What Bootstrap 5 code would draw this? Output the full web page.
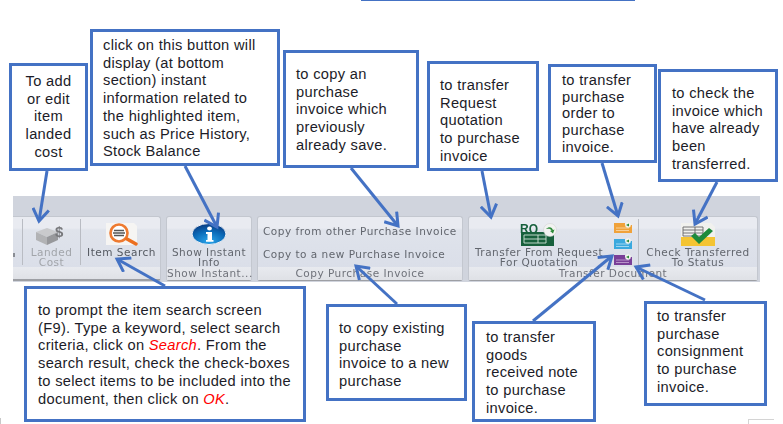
<!DOCTYPE html>
<html lang="en">
<head>
    <meta charset="UTF-8">
    <meta name="viewport" content="width=device-width, initial-scale=1.0">
    <title>Purchase Invoice Toolbar</title>
    <link rel="stylesheet" href="https://cdn.jsdelivr.net/npm/bootstrap@5.3.0/dist/css/bootstrap.min.css">
    <style>
        body { background: #fff; overflow: hidden; }
        .canvas { position: relative; width: 783px; height: 424px; overflow: hidden; padding: 196px 0 0 13px; }

        /* Ribbon */
        .ribbon { width: 747px; height: 86px; background: #d0d4dd; padding-top: 20px; gap: 5px; font-family: "DejaVu Sans", sans-serif; font-size: 10.5px; letter-spacing: .5px; line-height: 14px; color: #62666e; filter: blur(.45px); }
        .rib-group { height: 65px; flex: none; flex-direction: column; border: 1px solid #c3c7cf; border-bottom: 2px solid #9d9fa4; border-radius: 3px; background: linear-gradient(#e9ebf1 0, #e9ebf1 11px, #dfe3eb 13px, #d9dde8 100%); }
        .rib-first { width: 148px; border-left: 0; border-radius: 0 3px 3px 0; }
        .rib-info { width: 86px; }
        .rib-copy { width: 206px; }
        .rib-transfer { width: 290px; }
        .rib-body { height: 50px; flex: none; }
        .rib-cap { height: 13px; line-height: 13px; text-align: center; white-space: nowrap; background: linear-gradient(#e8eaef, #dfe1e6); color: #6f727a; }
        .rib-btn { flex: none; flex-direction: column; align-items: center; padding-top: 5px; text-align: center; white-space: nowrap; line-height: 10px; }
        .rib-btn svg { display: block; height: 24px; margin-bottom: 1px; flex: none; }
        .rib-stub { width: 9px; padding-top: 36px; align-items: flex-start; }
        .rib-sliver { width: 2px; height: 4px; background: #8a8d94; }
        .rib-landed { width: 57px; color: #a2a5aa; }
        .rib-search { width: 81px; color: #555961; }
        .rib-show { width: 84px; }
        .rib-sep { width: 1px; height: 46px; margin-top: 2px; background: #b9bcc3; flex: none; }
        .rib-lines { flex-direction: column; gap: 13px; padding: 9px 0 0 5px; line-height: 10px; white-space: nowrap; }
        .rib-req { width: 140px; }
        .rib-small { width: 29px; flex-direction: column; gap: 5px; padding: 5px 0 0 5px; flex: none; }
        .rib-small svg { display: block; width: 18px; height: 11px; }
        .rib-check { width: 118px; }

        /* Callouts */
        .note { position: absolute; background: #fff; border: 3px solid #4472c4; font-family: "Liberation Sans", Arial, sans-serif; font-size: 14.67px; letter-spacing: .3px; line-height: 17.7px; color: #1c1c28; white-space: nowrap; }
        .note em { color: #f00; }
        #noteLanded { left: 9px; top: 63px; width: 79px; height: 108px; padding-top: 7px; text-align: center; }
        #noteInfo { left: 90px; top: 29px; width: 190px; height: 137px; padding: 5px 0 0 10px; }
        #noteCopy { left: 283px; top: 50px; width: 136px; height: 118px; padding: 13px 0 0 10px; }
        #noteRq { left: 427px; top: 61px; width: 112px; height: 110px; padding: 13px 0 0 10px; }
        #noteOrder { left: 548px; top: 64px; width: 109px; height: 99px; padding: 5px 0 0 11px; line-height: 16.7px; }
        #noteCheck { left: 658px; top: 69px; width: 120px; height: 113px; padding: 13px 0 0 11px; }
        #noteSearch { left: 24px; top: 286px; width: 282px; height: 136px; padding: 13px 0 0 11px; }
        #noteNew { left: 326px; top: 304px; width: 141px; height: 97px; padding: 13px 0 0 10px; }
        #noteGrn { left: 472px; top: 321px; width: 124px; height: 101px; padding: 5px 0 0 11px; }
        #noteCons { left: 644px; top: 301px; width: 123px; height: 105px; padding: 4px 0 0 10px; }

        .arrows { position: absolute; left: 0; top: 0; width: 783px; height: 424px; }
        .arrows line { stroke: #4472c4; stroke-width: 3; }
        .top-rule { position: absolute; left: 361px; top: 0; width: 274px; height: 1px; background: #4472c4; }
        .page-mark-l { position: absolute; left: 0; top: 418px; width: 1px; height: 6px; background: #c8c8c8; }
        .page-mark-r { position: absolute; left: 748px; top: 419px; width: 26px; height: 5px; border: 1px solid #d4d4d4; border-width: 1px 0 0 1px; }
    </style>
</head>
<body>
<div class="canvas">
    <div class="ribbon d-flex">
        <div class="rib-group rib-first d-flex">
            <div class="rib-body d-flex">
                <div class="rib-btn rib-stub d-flex"><div class="rib-sliver"></div></div>
                <div class="rib-sep"></div>
                <div class="rib-btn rib-landed d-flex">
                    <svg width="34" height="24" viewBox="0 0 34 24">
                        <path d="M1 10l11-4 11 4-11 5z" fill="#c9cacc"/>
                        <path d="M1 10v8l11 5v-8z" fill="#b2b3b5"/>
                        <path d="M23 10v8l-11 5v-8z" fill="#97989b"/>
                        <text x="20" y="15" font-family="Liberation Sans, sans-serif" font-weight="700" font-size="15" letter-spacing="0" fill="#77787b">$</text>
                    </svg>
                    Landed<br>Cost
                </div>
                <div class="rib-sep"></div>
                <div class="rib-btn rib-search d-flex">
                    <svg width="36" height="24" viewBox="0 0 36 24">
                        <path d="M2 1h28l3 3v19H2z" fill="#f6f5f3"/>
                        <circle cx="15" cy="11" r="8.500" fill="#fff" stroke="#ee7a30" stroke-width="2.600"/>
                        <path d="M10 8.500h10M9 11h12M10 13.500h10" stroke="#555" stroke-width="1.500"/>
                        <path d="M23 17l9 5" stroke="#ec6f1f" stroke-width="3.400" stroke-linecap="round"/>
                    </svg>
                    Item Search
                </div>
            </div>
            <div class="rib-cap"></div>
        </div>

        <div class="rib-group rib-info d-flex">
            <div class="rib-body d-flex">
                <div class="rib-btn rib-show d-flex">
                    <svg width="36" height="24" viewBox="0 0 36 24">
                        <defs><radialGradient id="infoBlue" cx=".5" cy=".85" r=".8"><stop offset="0" stop-color="#2aa5ea"/><stop offset=".6" stop-color="#0a6ab8"/><stop offset="1" stop-color="#0a3f86"/></radialGradient></defs>
                        <ellipse cx="18" cy="12" rx="17" ry="10.500" fill="url(#infoBlue)" stroke="#eef0f5"/>
                        <ellipse cx="18.500" cy="6.500" rx="2.400" ry="2" fill="#fff"/>
                        <path d="M15 10h6v8h1.500v1.800h-7.500V18h1.500v-6H15z" fill="#fff"/>
                    </svg>
                    Show Instant<br>Info
                </div>
            </div>
            <div class="rib-cap">Show Instant...</div>
        </div>

        <div class="rib-group rib-copy d-flex">
            <div class="rib-body rib-lines d-flex">
                <div>Copy from other Purchase Invoice</div>
                <div>Copy to a new Purchase Invoice</div>
            </div>
            <div class="rib-cap">Copy Purchase Invoice</div>
        </div>

        <div class="rib-group rib-transfer d-flex">
            <div class="rib-body d-flex">
                <div class="rib-btn rib-req d-flex">
                    <svg width="38" height="24" viewBox="0 0 38 24">
                        <path d="M1 10h33v14H1z" fill="#17603c"/>
                        <text x="0" y="11" font-family="Liberation Sans, sans-serif" font-weight="700" font-size="12" letter-spacing="0" fill="#17603c">RQ</text>
                        <path d="M4 13h22v8H4zM4 17h22M18 13v8" fill="none" stroke="#cfe3d6" stroke-width=".9"/>
                        <circle cx="30" cy="8" r="6.500" fill="#f2f3f1" stroke="#ccc" stroke-width=".5"/>
                        <path d="M26 7c3-3 6-2 7 1l1.500-.5-1.500 4-3-2.500 1.500-.5c-1-2-3-2-5-1.500z" fill="#2e8b3a"/>
                    </svg>
                    Transfer From Request<br>For Quotation
                </div>
                <div class="rib-small d-flex">
                    <svg viewBox="0 0 18 11"><path d="M0 1h11v2h7v8H0z" fill="#f0a23a"/><path d="M2 6h13M2 8.500h13" stroke="#fbdcae" stroke-width=".8"/><circle cx="14" cy="3" r="2.800" fill="#f4f4ee"/><path d="M12 3l3-1.500v3z" fill="#2e8b3a"/></svg>
                    <svg viewBox="0 0 18 11"><path d="M0 1h11v2h7v8H0z" fill="#3ba9de"/><path d="M2 6h13M2 8.500h13" stroke="#b8e2f6" stroke-width=".8"/><circle cx="14" cy="3" r="2.800" fill="#f4f4ee"/><path d="M12 3l3-1.500v3z" fill="#2e8b3a"/></svg>
                    <svg viewBox="0 0 18 11"><path d="M0 1h11v2h7v8H0z" fill="#7a3f98"/><path d="M2 6h13M2 8.500h13" stroke="#c8aad6" stroke-width=".8"/><circle cx="14" cy="3" r="2.800" fill="#f4f4ee"/><path d="M12 3l3-1.500v3z" fill="#2e8b3a"/></svg>
                </div>
                <div class="rib-sep"></div>
                <div class="rib-btn rib-check d-flex">
                    <svg width="36" height="24" viewBox="0 0 36 24">
                        <path d="M1 1h30l4 4v19H1z" fill="#f1f1ee"/>
                        <path d="M1 15h34v9H1z" fill="#f4c433"/>
                        <path d="M3 5h20v9H3zM3 8h20M3 11h20M15 5v9" fill="none" stroke="#666" stroke-width=".9"/>
                        <path d="M11 14l4-3 4 4 10-9 4 3-14 13z" fill="#1d8a3b"/>
                    </svg>
                    Check Transferred<br>To Status
                </div>
            </div>
            <div class="rib-cap">Transfer Document</div>
        </div>
    </div>

    <div class="top-rule"></div>
    <div class="page-mark-l"></div>
    <div class="page-mark-r"></div>

    <svg class="arrows" viewBox="0 0 783 424">
        <defs>
            <marker id="head" viewBox="0 0 16 18" refX="13" refY="9" markerWidth="16" markerHeight="18" markerUnits="userSpaceOnUse" orient="auto">
                <path d="M1 1l12 8-12 8" fill="none" stroke="#4472c4" stroke-width="3"/>
            </marker>
        </defs>
        <line x1="47" y1="171" x2="39" y2="221" marker-end="url(#head)"/>
        <line x1="185" y1="166" x2="217" y2="227" marker-end="url(#head)"/>
        <line x1="351" y1="168" x2="398" y2="226" marker-end="url(#head)"/>
        <line x1="482" y1="171" x2="491" y2="217" marker-end="url(#head)"/>
        <line x1="602" y1="163" x2="618" y2="216" marker-end="url(#head)"/>
        <line x1="717" y1="182" x2="695" y2="224" marker-end="url(#head)"/>
        <line x1="165" y1="286" x2="117" y2="259" marker-end="url(#head)"/>
        <line x1="397" y1="304" x2="356" y2="266" marker-end="url(#head)"/>
        <line x1="533" y1="321" x2="612" y2="256" marker-end="url(#head)"/>
        <line x1="705" y1="300" x2="636" y2="267" marker-end="url(#head)"/>
    </svg>

    <div class="note" id="noteLanded">To add<br>or edit<br>item<br>landed<br>cost</div>
    <div class="note" id="noteInfo">click on this button will<br>display (at bottom<br>section) instant<br>information related to<br>the highlighted item,<br>such as Price History,<br>Stock Balance</div>
    <div class="note" id="noteCopy">to copy an<br>purchase<br>invoice which<br>previously<br>already save.</div>
    <div class="note" id="noteRq">to transfer<br>Request<br>quotation<br>to purchase<br>invoice</div>
    <div class="note" id="noteOrder">to transfer<br>purchase<br>order to<br>purchase<br>invoice.</div>
    <div class="note" id="noteCheck">to check the<br>invoice which<br>have already<br>been<br>transferred.</div>
    <div class="note" id="noteSearch">to prompt the item search screen<br>(F9). Type a keyword, select search<br>criteria, click on <em>Search</em>. From the<br>search result, check the check-boxes<br>to select items to be included into the<br>document, then click on <em>OK</em>.</div>
    <div class="note" id="noteNew">to copy existing<br>purchase<br>invoice to a new<br>purchase</div>
    <div class="note" id="noteGrn">to transfer<br>goods<br>received note<br>to purchase<br>invoice.</div>
    <div class="note" id="noteCons">to transfer<br>purchase<br>consignment<br>to purchase<br>invoice.</div>
</div>
<script src="https://cdn.jsdelivr.net/npm/bootstrap@5.3.0/dist/js/bootstrap.bundle.min.js"></script>
</body>
</html>
